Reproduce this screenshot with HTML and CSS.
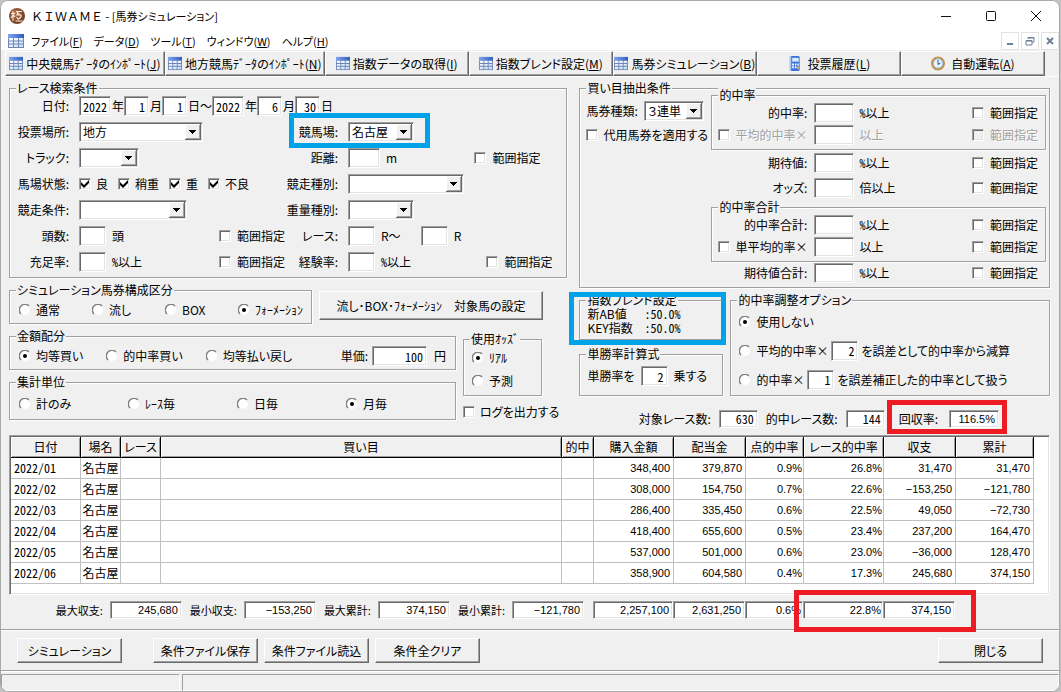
FILE: index.html
```html
<!DOCTYPE html>
<html lang="ja">
<head>
<meta charset="utf-8">
<title>ＫＩＷＡＭＥ - [馬券シミュレーション]</title>
<link rel="stylesheet" href="styles.css">
</head>
<body>
<svg class="defs" width="0" height="0" aria-hidden="true">
  <defs>
    <linearGradient id="head" x1="0" x2="1" y1="0" y2="0"><stop offset="0" stop-color="#7fa4f0"/><stop offset="1" stop-color="#2f5cc0"/></linearGradient>
    <linearGradient id="cells" x1="0" x2="1" y1="0" y2="1"><stop offset="0" stop-color="#fff"/><stop offset="1" stop-color="#c3dcf8"/></linearGradient>
    <radialGradient id="seal" cx=".4" cy=".35"><stop offset="0" stop-color="#b87a52"/><stop offset="1" stop-color="#7a4526"/></radialGradient>
    <symbol id="grid" viewBox="0 0 16 16" preserveAspectRatio="none">
      <rect x="0" y="1" width="16" height="14" fill="#6f86b4"/>
      <rect x="0" y="1" width="16" height="4" fill="url(#head)"/>
      <g fill="url(#cells)"><path d="M1 5h4v2.500H1zM6 5h4v2.500H6zM11 5h4v2.500h-4zM1 8.500h4v2H1zM6 8.500h4v2H6zM11 8.500h4v2h-4zM1 11.500h4V14H1zM6 11.500h4V14H6zM11 11.500h4V14h-4z"/></g>
    </symbol>
  </defs>
</svg>
<div class="window">
  <header class="titlebar">
    <svg class="logo" viewBox="0 0 16 16" aria-hidden="true"><circle cx="8" cy="8" r="8" fill="url(#seal)"/><path d="M4 3v10M2 5.500h4M4 7l-2 3M4.500 7l1.500 2M7 3.500h6M9 3.500L8 7h4v2M7.500 9l2 2.500M12 9l-3 2.500M10 5v2M6.500 13h7" fill="none" stroke="#fbeee2" stroke-width="1.100"/></svg>
    <h1 class="title"><span class="app">ＫＩＷＡＭＥ</span> - [馬券シミュレーション]</h1>
    <div class="winbuttons">
      <button type="button" aria-label="最小化"><svg viewBox="0 0 12 12"><path d="M1 6.500h10"/></svg></button>
      <button type="button" aria-label="最大化"><svg viewBox="0 0 12 12"><rect x="1.500" y="1.500" width="9" height="9" rx="1"/></svg></button>
      <button type="button" aria-label="閉じる"><svg viewBox="0 0 12 12"><path d="M1 1l10 10M11 1L1 11"/></svg></button>
    </div>
  </header>
  <nav class="menubar">
    <svg class="menuicon" aria-hidden="true"><use href="#grid"/></svg>
    <button type="button">ファイル(<u>F</u>)</button>
    <button type="button">データ(<u>D</u>)</button>
    <button type="button">ツール(<u>T</u>)</button>
    <button type="button">ウィンドウ(<u>W</u>)</button>
    <button type="button">ヘルプ(<u>H</u>)</button>
    <div class="mdi">
      <button type="button" aria-label="子ウィンドウを最小化"><svg viewBox="0 0 10 10"><path d="M2 8h6" stroke-width="2"/></svg></button>
      <button type="button" aria-label="子ウィンドウを元に戻す"><svg viewBox="0 0 10 10"><path d="M3 3V1.500h6V6H7M1 4.500h6V9H1zM3 2h6M1 5h6"/></svg></button>
      <button type="button" aria-label="子ウィンドウを閉じる"><svg viewBox="0 0 10 10"><path d="M2 2l6 6M8 2L2 8" stroke-width="2"/></svg></button>
    </div>
  </nav>
  <div class="toolbar">
    <button type="button" class="wide"><svg class="tico" aria-hidden="true"><use href="#grid"/></svg><span>中央競馬ﾃﾞｰﾀのｲﾝﾎﾟｰﾄ(<u>J</u>)</span></button>
    <button type="button" class="wide"><svg class="tico" aria-hidden="true"><use href="#grid"/></svg><span>地方競馬ﾃﾞｰﾀのｲﾝﾎﾟｰﾄ(<u>N</u>)</span></button>
    <button type="button"><svg class="tico" aria-hidden="true"><use href="#grid"/></svg><span>指数データの取得(<u>I</u>)</span></button>
    <button type="button"><svg class="tico" aria-hidden="true"><use href="#grid"/></svg><span>指数ブレンド設定(<u>M</u>)</span></button>
    <button type="button"><svg class="tico" aria-hidden="true"><use href="#grid"/></svg><span>馬券シミュレーション(<u>B</u>)</span></button>
    <button type="button" class="roomy"><svg class="tico" viewBox="0 0 14 16" aria-hidden="true"><path d="M2 0h9l1 1v14l-1 1H2z" fill="#3d74d8"/><path d="M1 1l2-1v16l-2-1z" fill="#a9c8f8"/><rect x="4" y="2" width="7" height="4" fill="#d5ecff"/><path d="M4 8h2v2H4zM7 8h1.500v2H7zM9.500 8H11v2H9.500zM4 11h2v2H4zM7 11h1.500v2H7z" fill="#fff"/><path d="M9.500 11H11v3H9.500z" fill="#ffc54d"/></svg><span>投票履歴(<u>L</u>)</span></button>
    <button type="button" class="roomy"><svg class="tico" viewBox="0 0 14 14" aria-hidden="true"><circle cx="7" cy="7" r="6" fill="#eaf5ff" stroke="#c2924f" stroke-width="2"/><circle cx="7" cy="7" r="4.600" fill="none" stroke="#8fb4dc"/><path d="M7 3.500V8l2.500-1.500" fill="none" stroke="#34507c"/></svg><span>自動運転(<u>A</u>)</span></button>
  </div>

  <main class="main">
    <div class="columns">
      <div class="col">
        <fieldset class="search">
          <legend>レース検索条件</legend>
          <div class="rows">
            <div class="row date">
              <label class="cap" for="y1">日付:</label>
              <input id="y1" class="w32" value="2022"><label for="y1">年</label>
              <input id="m1" class="w25" value="1"><label for="m1">月</label>
              <input id="d1" class="w25" value="1"><label for="d1">日～</label>
              <input id="y2" class="w32" value="2022"><label for="y2">年</label>
              <input id="m2" class="w25" value="6"><label for="m2">月</label>
              <input id="d2" class="w25" value="30"><label for="d2">日</label>
            </div>
            <div class="row">
              <label class="cap" for="place">投票場所:</label>
              <div class="left"><select id="place" class="s124"><option>地方</option></select></div>
              <label class="cap2" for="track">競馬場:</label>
              <div class="right"><select id="track" class="s66"><option>名古屋</option></select></div>
              <span class="mark blue mark-track"></span>
            </div>
            <div class="row">
              <label class="cap" for="surface">トラック:</label>
              <div class="left"><select id="surface" class="s60"><option></option></select></div>
              <label class="cap2" for="dist">距離:</label>
              <div class="right"><input id="dist" class="w32"><label for="dist">m</label><label class="range far"><input type="checkbox">範囲指定</label></div>
            </div>
            <div class="row">
              <span class="cap">馬場状態:</span>
              <div class="left ground">
                <label><input type="checkbox" checked>良</label>
                <label><input type="checkbox" checked>稍重</label>
                <label><input type="checkbox" checked>重</label>
                <label><input type="checkbox" checked>不良</label>
              </div>
              <label class="cap2" for="kind">競走種別:</label>
              <div class="right"><select id="kind" class="s116"><option></option></select></div>
            </div>
            <div class="row">
              <label class="cap" for="cond">競走条件:</label>
              <div class="left"><select id="cond" class="s108"><option></option></select></div>
              <label class="cap2" for="weight">重量種別:</label>
              <div class="right"><select id="weight" class="s66"><option></option></select></div>
            </div>
            <div class="row">
              <label class="cap" for="heads">頭数:</label>
              <div class="left"><input id="heads" class="w26"><label for="heads">頭</label><label class="range"><input type="checkbox">範囲指定</label></div>
              <label class="cap2" for="r1">レース:</label>
              <div class="right"><input id="r1" class="w26"><label for="r1" class="from">R～</label><input id="r2" class="w26"><label for="r2">R</label></div>
            </div>
            <div class="row">
              <label class="cap" for="fill">充足率:</label>
              <div class="left"><input id="fill" class="w26"><label for="fill" class="hw">%以上</label><label class="range"><input type="checkbox">範囲指定</label></div>
              <label class="cap2" for="exp">経験率:</label>
              <div class="right"><input id="exp" class="w26"><label for="exp" class="hw">%以上</label><label class="range"><input type="checkbox">範囲指定</label></div>
            </div>
          </div>
        </fieldset>

        <div class="pair">
          <fieldset class="formation">
            <legend>シミュレーション馬券構成区分</legend>
            <div class="radios r4">
              <label><input type="radio" name="form">通常</label>
              <label><input type="radio" name="form">流し</label>
              <label><input type="radio" name="form">BOX</label>
              <label><input type="radio" name="form" checked>ﾌｫｰﾒｰｼｮﾝ</label>
            </div>
          </fieldset>
          <button type="button" class="btn target">流し･BOX･ﾌｫｰﾒｰｼｮﾝ　対象馬の設定</button>
        </div>

        <div class="pair">
          <div class="stack">
            <fieldset>
              <legend>金額配分</legend>
              <div class="radios money">
                <label><input type="radio" name="money" checked>均等買い</label>
                <label><input type="radio" name="money">的中率買い</label>
                <label><input type="radio" name="money">均等払い戻し</label>
                <span class="unit"><label for="price">単価:</label><input id="price" class="w54" value="100"><label for="price">円</label></span>
              </div>
            </fieldset>
            <fieldset>
              <legend>集計単位</legend>
              <div class="radios period">
                <label><input type="radio" name="sum">計のみ</label>
                <label><input type="radio" name="sum">ﾚｰｽ毎</label>
                <label><input type="radio" name="sum">日毎</label>
                <label><input type="radio" name="sum" checked>月毎</label>
              </div>
            </fieldset>
          </div>
          <div class="oddscol">
            <fieldset class="odds">
              <legend>使用ｵｯｽﾞ</legend>
              <label><input type="radio" name="odds" checked>ﾘｱﾙ</label>
              <label><input type="radio" name="odds">予測</label>
            </fieldset>
            <label class="log"><input type="checkbox">ログを出力する</label>
          </div>
        </div>
      </div>

      <div class="col">
        <fieldset class="extract">
          <legend>買い目抽出条件</legend>
          <div class="extractgrid">
            <div class="ticket">
              <div class="line"><label for="type">馬券種類:</label><select id="type" class="s60"><option>３連単</option></select></div>
              <label class="line"><input type="checkbox">代用馬券を適用する</label>
            </div>
            <div class="rates">
              <fieldset>
                <legend>的中率</legend>
                <div class="rate"><label class="name" for="a1">的中率:</label><input id="a1" class="w40"><span class="hw">%以上</span><label class="range"><input type="checkbox">範囲指定</label></div>
                <div class="rate off"><label class="name"><input type="checkbox">平均的中率×</label><input class="w40" aria-label="平均的中率"><span>以上</span><label class="range"><input type="checkbox" disabled>範囲指定</label></div>
              </fieldset>
              <div class="plain two">
                <div class="rate"><label class="name" for="a3">期待値:</label><input id="a3" class="w40"><span class="hw">%以上</span><label class="range"><input type="checkbox">範囲指定</label></div>
                <div class="rate"><label class="name" for="a4">オッズ:</label><input id="a4" class="w40"><span>倍以上</span><label class="range"><input type="checkbox">範囲指定</label></div>
              </div>
              <fieldset>
                <legend>的中率合計</legend>
                <div class="rate"><label class="name" for="a5">的中率合計:</label><input id="a5" class="w40"><span class="hw">%以上</span><label class="range"><input type="checkbox">範囲指定</label></div>
                <div class="rate"><label class="name"><input type="checkbox">単平均的率×</label><input class="w40" aria-label="単平均的率"><span>以上</span><label class="range"><input type="checkbox">範囲指定</label></div>
              </fieldset>
              <div class="plain one">
                <div class="rate"><label class="name" for="a7">期待値合計:</label><input id="a7" class="w40"><span class="hw">%以上</span><label class="range"><input type="checkbox">範囲指定</label></div>
              </div>
            </div>
          </div>
        </fieldset>

        <div class="pair options">
          <div class="formulas">
            <div class="blendwrap">
              <fieldset class="blend">
                <legend>指数ブレンド設定</legend>
                <dl><dt>新AB値</dt><dd>:50.0%</dd><dt>KEY指数</dt><dd>:50.0%</dd></dl>
              </fieldset>
              <span class="mark blue mark-blend"></span>
            </div>
            <fieldset class="power">
              <legend>単勝率計算式</legend>
              <div class="line"><label for="pow">単勝率を</label><input id="pow" class="w26" value="2"><label for="pow">乗する</label></div>
            </fieldset>
          </div>
          <fieldset class="adjust">
            <legend>的中率調整オプション</legend>
            <div class="opt"><label><input type="radio" name="adj" checked>使用しない</label></div>
            <div class="opt"><label><input type="radio" name="adj">平均的中率×</label><input class="w26" value="2" aria-label="平均的中率の倍数"><span>を誤差として的中率から減算</span></div>
            <div class="opt"><label><input type="radio" name="adj">的中率×</label><input class="w26" value="1" aria-label="的中率の倍数"><span>を誤差補正した的中率として扱う</span></div>
          </fieldset>
        </div>

        <div class="totals">
          <label for="t1">対象レース数:</label><input id="t1" class="w39" value="630" readonly>
          <label for="t2">的中レース数:</label><input id="t2" class="w39" value="144" readonly>
          <span class="recover"><label for="t3">回収率:</label><input id="t3" class="w50 amount" value="116.5%" readonly><span class="mark red mark-recover"></span></span>
        </div>
      </div>
    </div>

    <div class="gridbox">
      <table>
        <colgroup><col class="c70"><col class="c40"><col class="c40"><col><col class="c32"><col class="c80"><col class="c72"><col class="c58"><col class="c80"><col class="c72"><col class="c78"></colgroup>
        <thead><tr><th>日付</th><th>場名</th><th>レース</th><th>買い目</th><th>的中</th><th>購入金額</th><th>配当金</th><th>点的中率</th><th>レース的中率</th><th>収支</th><th>累計</th></tr></thead>
        <tbody>
          <tr><td class="day">2022/01</td><td class="place">名古屋</td><td></td><td></td><td></td><td>348,400</td><td>379,870</td><td class="pct">0.9%</td><td class="pct">26.8%</td><td>31,470</td><td>31,470</td></tr>
          <tr><td class="day">2022/02</td><td class="place">名古屋</td><td></td><td></td><td></td><td>308,000</td><td>154,750</td><td class="pct">0.7%</td><td class="pct">22.6%</td><td>−153,250</td><td>−121,780</td></tr>
          <tr><td class="day">2022/03</td><td class="place">名古屋</td><td></td><td></td><td></td><td>286,400</td><td>335,450</td><td class="pct">0.6%</td><td class="pct">22.5%</td><td>49,050</td><td>−72,730</td></tr>
          <tr><td class="day">2022/04</td><td class="place">名古屋</td><td></td><td></td><td></td><td>418,400</td><td>655,600</td><td class="pct">0.5%</td><td class="pct">23.4%</td><td>237,200</td><td>164,470</td></tr>
          <tr><td class="day">2022/05</td><td class="place">名古屋</td><td></td><td></td><td></td><td>537,000</td><td>501,000</td><td class="pct">0.6%</td><td class="pct">23.0%</td><td>−36,000</td><td>128,470</td></tr>
          <tr><td class="day">2022/06</td><td class="place">名古屋</td><td></td><td></td><td></td><td>358,900</td><td>604,580</td><td class="pct">0.4%</td><td class="pct">17.3%</td><td>245,680</td><td>374,150</td></tr>
        </tbody>
      </table>
    </div>

    <div class="summary">
      <label>最大収支:<input class="w72" value="245,680" readonly></label>
      <label>最小収支:<input class="w72" value="−153,250" readonly></label>
      <label>最大累計:<input class="w72" value="374,150" readonly></label>
      <label>最小累計:<input class="w72" value="−121,780" readonly></label>
      <div class="sums">
        <input class="c80" value="2,257,100" aria-label="購入金額合計" readonly>
        <input class="c72" value="2,631,250" aria-label="配当金合計" readonly>
        <input class="c58 pct" value="0.6%" aria-label="点的中率" readonly>
        <input class="c80 pct" value="22.8%" aria-label="レース的中率" readonly>
        <input class="c72" value="374,150" aria-label="収支合計" readonly>
        <span class="mark red mark-sums"></span>
      </div>
    </div>
  </main>

  <div class="actions">
    <button type="button" class="btn run">シミュレーション</button>
    <button type="button" class="btn">条件ファイル保存</button>
    <button type="button" class="btn">条件ファイル読込</button>
    <button type="button" class="btn">条件全クリア</button>
    <button type="button" class="btn close">閉じる</button>
  </div>
  <footer class="status"><span></span><span></span></footer>
</div>
</body>
</html>
```

FILE: styles.css
```css
* { box-sizing: border-box; }

body {
  margin: 0;
  background: #c4c4c4;
  color: #000;
  font: 12px/14px "Noto Sans CJK JP", sans-serif;
  font-feature-settings: "palt";
}

button, input, select { font: inherit; font-feature-settings: inherit; color: inherit; margin: 0; }
button { border: 0; padding: 0; background: none; white-space: nowrap; }
label, span, legend { white-space: nowrap; }
.defs { position: absolute; }

.window {
  display: flex;
  flex-direction: column;
  min-height: 100vh;
  margin-right: 1px;
  border: 1px solid #a8a8a8;
  border-radius: 8px;
  background: #f0f0f0;
  overflow: hidden;
}

/* title bar and menu */
.titlebar { display: flex; align-items: center; height: 30px; padding: 0 17px 0 8px; background: #fff; }
.logo { width: 16px; height: 16px; margin-right: 6px; }
.title { margin: 0; font-size: 11px; font-weight: 400; }
.app { font-size: 12px; font-feature-settings: normal; }
.winbuttons { display: flex; gap: 33px; margin-left: auto; }
.winbuttons svg { display: block; width: 12px; height: 12px; fill: none; stroke: #111; }

.menubar { display: flex; align-items: center; gap: 11px; height: 19px; padding-left: 7px; background: #fff; font-size: 11px; }
.menuicon { width: 16px; height: 16px; margin-right: -4px; }
.mdi { display: flex; gap: 2px; margin-left: auto; }
.mdi button { width: 18px; height: 18px; border: 1px solid #e2e2e2; background: #fff; }
.mdi svg { display: block; width: 10px; height: 10px; margin: 3px; fill: none; stroke: #6f7f95; }

.toolbar { display: flex; padding: 1px 14px 0 4px; border-bottom: 1px solid #fff; }
.toolbar button {
  display: flex; flex: 144 1 0; align-items: center; justify-content: center; gap: 3px;
  height: 25px; min-width: 0;
  border: 1px solid; border-color: #fff #696969 #696969 #fff;
  box-shadow: inset -1px -1px #a0a0a0;
}
.toolbar .wide { flex-grow: 160; }
.toolbar .roomy { gap: 6px; }
.tico { width: 14px; height: 15px; flex: none; }

/* common controls */
input, select {
  height: 20px; padding: 0 3px;
  border: 1px solid; border-color: #a0a0a0 #fff #fff #a0a0a0; border-radius: 0;
  background: #fff; outline: 0;
  box-shadow: inset 1px 1px #696969, inset -1px -1px #e3e3e3;
}
input { font-feature-settings: "hwid"; text-align: right; flex: none; }
select {
  appearance: none; padding: 0 18px 0 3px; flex: none;
  background: #fff url("data:image/svg+xml,%3Csvg xmlns='http://www.w3.org/2000/svg' width='16' height='16' shape-rendering='crispEdges'%3E%3Cpath fill='%23f0f0f0' d='M0 0h16v16H0z'/%3E%3Cpath fill='%23fff' d='M0 0h15v1H1v14H0z'/%3E%3Cpath fill='%23a0a0a0' d='M14 1h1v14H1v-1h13z'/%3E%3Cpath fill='%23696969' d='M15 0h1v16H0v-1h15z'/%3E%3Cpath d='M4 6h7v1H4zM5 7h5v1H5zM6 8h3v1H6zM7 9h1v1H7z'/%3E%3C/svg%3E") no-repeat right 1px center;
}
input[type="checkbox"] {
  appearance: none; width: 12px; height: 12px; padding: 0;
}
input[type="checkbox"]:checked {
  background: #fff url("data:image/svg+xml,%3Csvg xmlns='http://www.w3.org/2000/svg' width='8' height='8'%3E%3Cpath d='M0 2v3l3 3 5-5V0L3 5z'/%3E%3C/svg%3E") no-repeat center;
}
input[type="checkbox"]:disabled { background: #f0f0f0; }
input[type="radio"] {
  appearance: none; width: 12px; height: 12px; padding: 0; border: 0; box-shadow: none;
  background: url("data:image/svg+xml,%3Csvg xmlns='http://www.w3.org/2000/svg' width='12' height='12'%3E%3Ccircle cx='6' cy='6' r='5' fill='%23fff'/%3E%3Cpath d='M2 10A5.500 5.500 0 0 1 10 2' fill='none' stroke='%23808080' stroke-width='1.400'/%3E%3C/svg%3E");
}
input[type="radio"]:checked {
  background: url("data:image/svg+xml,%3Csvg xmlns='http://www.w3.org/2000/svg' width='12' height='12'%3E%3Ccircle cx='6' cy='6' r='5' fill='%23fff'/%3E%3Cpath d='M2 10A5.500 5.500 0 0 1 10 2' fill='none' stroke='%23808080' stroke-width='1.400'/%3E%3Ccircle cx='6' cy='6' r='2'/%3E%3C/svg%3E");
}
label:has(> [type="checkbox"]), label:has(> [type="radio"]) { display: flex; align-items: center; gap: 5px; }

fieldset {
  min-width: 0; margin: 0; padding: 0;
  border: 1px solid #a0a0a0;
  box-shadow: 1px 1px #fff, inset 1px 1px #fff;
}
legend { margin-left: 6px; padding: 0 1px; background: #f0f0f0; }

.btn {
  width: 105px; height: 25px;
  border: 1px solid; border-color: #fff #696969 #696969 #fff;
  background: #f0f0f0;
  box-shadow: inset -1px -1px #a0a0a0;
}
.hw { font-feature-settings: "hwid"; }

.w25 { width: 25px; } .w26 { width: 27px; } .w32 { width: 32px; }
.w39 { width: 39px; } .w40 { width: 40px; } .w50 { width: 50px; }
.w54 { width: 55px; } .w72 { width: 72px; }
.s60 { width: 60px; } .s66 { width: 66px; } .s108 { width: 108px; }
.s116 { width: 116px; } .s124 { width: 124px; }
.c32 { width: 32px; } .c40 { width: 40px; } .c58 { width: 58px; } .c70 { width: 70px; }
.c72 { width: 72px; } .c78 { width: 78px; } .c80 { width: 80px; }

/* highlight frames lying over the form */
.mark { position: absolute; border: 5px solid; pointer-events: none; z-index: 1; }
.blue { border-color: #00a2e8; }
.red { border-color: #ed1c24; }
.mark-track { left: 279px; top: -6px; width: 141px; height: 35px; }
.mark-blend { inset: -1px -3px -5px -10px; }
.mark-recover { inset: -10px -8px -6px -12px; }
.mark-sums { top: -11px; right: -21px; width: 182px; height: 42px; }

.main { padding: 4px 9px 0 8px; }
.columns { display: grid; grid-template-columns: 559fr 471fr; gap: 12px; }
.col { display: flex; flex-direction: column; gap: 5px; min-width: 0; }

/* race search */
.rows { margin-top: -2px; padding-bottom: 2px; }
.row { position: relative; display: grid; grid-template-columns: 61px 209px 60px 1fr; align-items: center; height: 26px; }
.cap, .cap2 { padding-right: 2px; text-align: right; }
.cap2 { margin-left: -20px; }
.left, .right { display: flex; align-items: center; gap: 6px; margin-left: 8px; }
.right { padding-right: 14px; }
.right .far { margin-right: 12px; }
.range { margin-left: auto; }
.range:has(> input) { gap: 6px; }
.left .range { margin-right: -5px; }
.row.date { display: flex; }
.date .cap { width: 61px; margin-right: 8px; }
.date input + label { padding-left: 1px; }
.left.ground { gap: 10px; }
.from { margin-right: 14px; }

.pair { display: flex; gap: 7px; }
.formation { width: 303px; }
.target { width: 224px; height: 29px; margin-top: 8px; }
.radios { display: flex; align-items: center; height: 26px; padding-left: 9px; }
.r4 { display: grid; grid-template-columns: 73px 73px 73px 1fr; }
.stack { display: flex; flex-direction: column; gap: 5px; width: 447px; }
.money { gap: 23px; padding-right: 9px; }
.unit { display: flex; align-items: center; gap: 4px; margin-left: auto; }
.unit label:last-child { margin-left: 3px; }
.period { display: grid; grid-template-columns: repeat(4, 109px); height: 30px; }
.oddscol { padding-top: 3px; }
.odds { width: 79px; padding-bottom: 3px; }
.odds label { height: 23px; padding-left: 8px; }
.log { height: 32px; }

/* ticket extraction */
.extractgrid { display: grid; grid-template-columns: 131px 1fr; }
.ticket { padding: 4px 0 0 6px; }
.line { display: flex; align-items: center; gap: 6px; height: 24px; }
.rates { margin-top: -7px; padding-right: 3px; }
.rate { display: flex; align-items: center; gap: 5px; height: 23px; padding-right: 7px; }
.rates fieldset { padding-bottom: 3px; }
.rates fieldset .rate { margin-top: -1px; }
.name { width: 97px; padding-right: 2px; justify-content: flex-end; text-align: right; }
.off { color: #a0a0a0; text-shadow: 1px 1px #fff; }
.plain { padding: 0 1px; }
.plain .rate { height: 25px; }
.one { margin-top: -2px; padding-bottom: 2px; }

/* blend, formula, adjustment */
.formulas { display: flex; flex-direction: column; gap: 7px; width: 144px; }
.blendwrap { position: relative; }
.blend dl { display: grid; grid-template-columns: 57px 1fr; line-height: 14px; margin: 0 0 4px 7px; }
.blend dd { margin: 0; font-feature-settings: "hwid"; }
.power .line { height: 34px; padding: 0 0 4px 7px; }
.adjust { flex: 1; }
.opt { display: flex; align-items: center; gap: 3px; height: 29px; padding-left: 8px; }

.totals { display: flex; align-items: center; justify-content: flex-end; gap: 8px; height: 33px; margin-top: 1px; padding-right: 51px; }
.recover { position: relative; display: flex; align-items: center; gap: 11px; margin-left: 6px; }
.totals input, .summary input { height: 18px; }

/* results */
.gridbox {
  padding: 1px 15px 10px 1px;
  border: 1px solid; border-color: #a0a0a0 #fff #fff #a0a0a0;
  background: #fff;
  box-shadow: inset 1px 1px #696969, inset -1px -1px #e3e3e3;
}
table { width: 100%; table-layout: fixed; border-collapse: separate; border-spacing: 0; }
th {
  height: 21px; padding: 0; background: #f0f0f0; font-weight: 400;
  border-right: 1px solid #000; border-bottom: 1px solid #000;
  box-shadow: inset 1px 1px #fff, inset -1px -1px #a0a0a0;
  white-space: nowrap;
}
td { height: 21px; padding: 0 3px; border-right: 1px solid #c0c0c0; border-bottom: 1px solid #c0c0c0; text-align: right; }
td, .summary input, .totals .amount { font: 11px/14px "Liberation Sans", sans-serif; }
td.pct, input.pct { padding-right: 1px; }
td.day { font: inherit; font-feature-settings: "hwid"; text-align: left; }
td.place { padding: 0; font: inherit; text-align: center; }

.summary { display: flex; align-items: center; justify-content: flex-end; gap: 8px; height: 30px; padding-right: 95px; }
.summary label { display: flex; align-items: center; gap: 7px; font-size: 11px; }
.sums { position: relative; display: flex; margin-left: 1px; }

.actions { display: flex; gap: 6px; margin-top: 4px; padding: 8px 16px 7px; border-top: 1px solid #a0a0a0; border-bottom: 1px solid #a0a0a0; box-shadow: inset 0 1px #fff; }
.run { margin-right: 25px; }
.close { margin-left: auto; }
.status { display: grid; grid-template-columns: 179px 1fr; gap: 2px; flex: 1; min-height: 18px; padding-top: 2px; border-top: 1px solid #fff; }
.status span { border: 1px solid; border-color: #a0a0a0 #fff #fff #a0a0a0; }
```
